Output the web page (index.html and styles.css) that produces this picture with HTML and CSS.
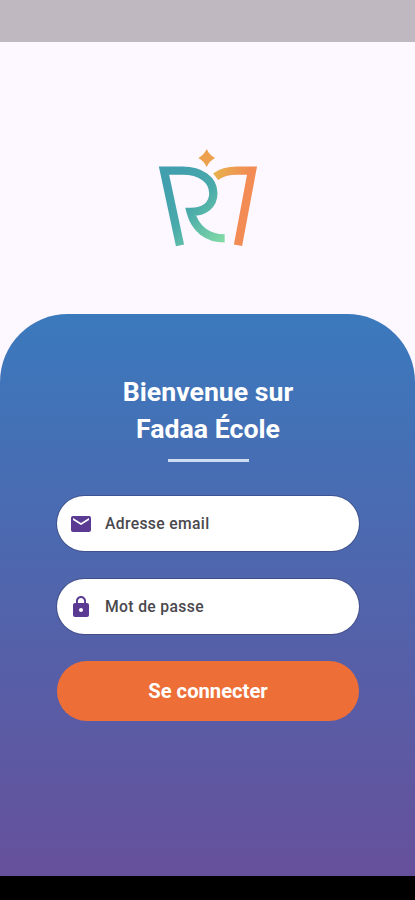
FILE: index.html
```
<!DOCTYPE html>
<html lang="fr">
<head>
  <meta charset="UTF-8" />
  <meta name="viewport" content="width=device-width, initial-scale=1" />
  <title>Fadaa École - Connexion</title>
  <link rel="stylesheet" href="styles.css">
</head>
<body>
  <div class="status-bar"></div>

  <header class="logo-area">
    <svg class="logo" viewBox="0 0 390 345" fill="none" stroke-width="25">
      <defs>
        <linearGradient id="gradR" gradientUnits="userSpaceOnUse" x1="60" y1="130" x2="240" y2="300">
          <stop offset="0" stop-color="#429fae" />
          <stop offset="0.45" stop-color="#49aaaa" />
          <stop offset="1" stop-color="#83dba6" />
        </linearGradient>
        <linearGradient id="grad7" gradientUnits="userSpaceOnUse" x1="205" y1="100" x2="305" y2="125">
          <stop offset="0" stop-color="#e7b34c" />
          <stop offset="1" stop-color="#f28b54" />
        </linearGradient>
      </defs>
      <path stroke="url(#gradR)" d="M105 316 L57 92 H112 C167 92 205 119 205 160 C205 195 179 216 137 216 C150 266 187 295 239 295" />
      <path stroke="url(#grad7)" d="M212 110 C230 96 252 92 277 92 H321 L279 316" />
      <path fill="#eda14f" d="M185 27 Q193 45 210 54 Q193 63 185 81 Q177 63 160 54 Q177 45 185 27 Z" />
    </svg>
  </header>

  <main class="panel">
    <h1>Bienvenue sur<br>Fadaa École</h1>
    <div class="divider"></div>

    <form class="login-form">
      <label class="field">
        <svg class="icon" viewBox="0 0 24 24">
          <path d="M20 4H4c-1.100 0-2 .9-2 2v12c0 1.100.9 2 2 2h16c1.100 0 2-.9 2-2V6c0-1.100-.9-2-2-2zm0 4l-8 5-8-5V6l8 5 8-5v2z" />
        </svg>
        <input type="email" placeholder="Adresse email" />
      </label>
      <label class="field">
        <svg class="icon" viewBox="0 0 24 24">
          <path d="M18 8h-1V6c0-2.760-2.240-5-5-5S7 3.240 7 6v2H6c-1.100 0-2 .9-2 2v10c0 1.100.9 2 2 2h12c1.100 0 2-.9 2-2V10c0-1.100-.9-2-2-2zm-6 9c-1.100 0-2-.9-2-2s.9-2 2-2 2 .9 2 2-.9 2-2 2zm3.100-9H8.900V6c0-1.710 1.390-3.100 3.100-3.100s3.100 1.390 3.100 3.100v2z" />
        </svg>
        <input type="password" placeholder="Mot de passe" />
      </label>
      <button type="button" class="btn-login">Se connecter</button>
    </form>
  </main>

  <div class="nav-bar"></div>
</body>
</html>
```
FILE: styles.css
```
* {
  box-sizing: border-box;
}
body {
  margin: 0;
  height: 900px;
  display: flex;
  flex-direction: column;
  font-family: Roboto, sans-serif;
  background: #fdf7ff;
}
.status-bar {
  height: 42px;
  background: #bfb8c0;
}
.logo-area {
  height: 272px;
  padding-top: 98px;
  text-align: center;
}
.logo {
  width: 130px;
  height: 115px;
  margin-left: 5px;
}

/* Blue panel */
.panel {
  flex: 1;
  padding: 60px 56px 0 57px;
  border-radius: 68px 68px 0 0;
  background: linear-gradient(#3b79bd, #66509b);
}
h1 {
  margin: 0;
  text-align: center;
  color: #fff;
  font-size: 26.7px;
  font-weight: 700;
  line-height: 37px;
}
.divider {
  width: 81px;
  height: 3px;
  margin: 11px auto 0;
  background: #cfdcf0;
}
.login-form {
  display: flex;
  flex-direction: column;
  gap: 28px;
  margin-top: 34px;
}
.field {
  display: flex;
  align-items: center;
  height: 55px;
  padding: 0 20px 0 12px;
  border-radius: 28px;
  background: #fff;
  box-shadow: 0 0 0 1px rgba(40, 40, 80, 0.35);
}
.icon {
  width: 24px;
  height: 24px;
  flex-shrink: 0;
  fill: #5b3a94;
}
.field input {
  flex: 1;
  min-width: 0;
  margin-left: 12px;
  padding: 0;
  border: none;
  outline: none;
  background: none;
  font-family: inherit;
  font-size: 15.7px;
  font-weight: 500;
  letter-spacing: 0.35px;
}
.field input::placeholder {
  color: #4a484d;
  opacity: 1;
}
.btn-login {
  height: 60px;
  margin-top: -1px;
  border: none;
  border-radius: 30px;
  background: #ed6f37;
  color: #fff;
  font-family: inherit;
  font-size: 20.2px;
  font-weight: 700;
  cursor: pointer;
}

.nav-bar {
  height: 24px;
  background: #000;
}
```
